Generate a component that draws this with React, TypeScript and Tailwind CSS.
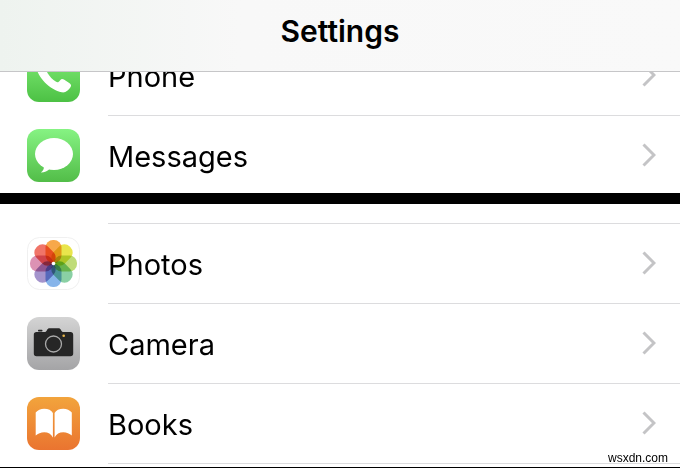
import type { ReactNode } from "react";

const petals = [
  { angle: 0, color: "#f7a84a" },
  { angle: 45, color: "#e9e54c" },
  { angle: 90, color: "#bfdc78" },
  { angle: 135, color: "#8ad0a4" },
  { angle: 180, color: "#86b4ea" },
  { angle: 225, color: "#a494cc" },
  { angle: 270, color: "#dc92b4" },
  { angle: 315, color: "#f07468" },
];

function PhoneIcon() {
  return (
    <svg viewBox="0 0 53 53" className="size-[53px]" aria-hidden="true">
      <defs>
        <linearGradient id="phone-bg" x1="0" y1="0" x2="0" y2="1">
          <stop offset="0" stopColor="#86f07c" />
          <stop offset="1" stopColor="#4cc144" />
        </linearGradient>
      </defs>
      <rect width="53" height="53" rx="12" fill="url(#phone-bg)" />
      <path
        d="M14.500 9.500c1.800-1.400 3.200-1 4.400.8l3.600 5.400c1 1.600.8 2.800-.6 4-1.700 1.400-2.600 2.300-1.400 4.300 2.200 3.700 5 6.500 8.600 8.800 1.700 1 2.500.4 3.900-1.300 1.200-1.600 2.600-1.800 4.300-.7l5.300 3.500c1.700 1.200 1.900 2.500.7 4.300-1.800 2.700-4.600 5.400-8.600 4.700C23.500 41.300 9.500 27.500 9.600 17.500c.1-3.300 2.300-6 4.900-8z"
        fill="#fff"
      />
    </svg>
  );
}

function MessagesIcon() {
  return (
    <svg viewBox="0 0 53 53" className="size-[53px]" aria-hidden="true">
      <defs>
        <linearGradient id="messages-bg" x1="0" y1="0" x2="0" y2="1">
          <stop offset="0" stopColor="#86f383" />
          <stop offset="1" stopColor="#52bd48" />
        </linearGradient>
      </defs>
      <rect width="53" height="53" rx="12" fill="url(#messages-bg)" />
      <ellipse cx="27" cy="25" rx="19" ry="16" fill="#fff" />
      <path d="M17 37c.2 3-1 5-3.200 6.600 3.800 0 6.800-1.200 9.200-4z" fill="#fff" />
    </svg>
  );
}

function PhotosIcon() {
  return (
    <svg viewBox="0 0 53 53" className="size-[53px]" aria-hidden="true">
      <rect x=".5" y=".5" width="52" height="52" rx="12" fill="#fff" stroke="#f0f0f0" />
      <g className="isolate">
        {petals.map((petal) => (
          <rect
            key={petal.angle}
            x="18.500"
            y="3"
            width="16"
            height="23"
            rx="7.500"
            fill={petal.color}
            transform={`rotate(${petal.angle} 26.5 26.5)`}
            className="mix-blend-multiply"
          />
        ))}
      </g>
      <circle cx="26.500" cy="26.500" r="1.800" fill="#fff" />
    </svg>
  );
}

function CameraIcon() {
  return (
    <svg viewBox="0 0 53 53" className="size-[53px]" aria-hidden="true">
      <defs>
        <linearGradient id="camera-bg" x1="0" y1="0" x2="0" y2="1">
          <stop offset="0" stopColor="#d4d4d4" />
          <stop offset="1" stopColor="#a4a4a6" />
        </linearGradient>
      </defs>
      <rect width="53" height="53" rx="12" fill="url(#camera-bg)" />
      <path
        d="M9.500 15h8c1.300 0 1.800-.7 2.400-1.800.7-1.400 1.400-1.900 2.800-1.900h8.600c1.400 0 2.100.5 2.800 1.900.6 1.100 1.100 1.800 2.400 1.800h7c1.700 0 2.700 1 2.700 2.700v18.800c0 1.700-1 2.700-2.700 2.700h-34c-1.700 0-2.700-1-2.700-2.700V17.700c0-1.700 1-2.700 2.700-2.700z"
        fill="#262626"
      />
      <rect x="11" y="12.800" width="4.500" height="1.600" rx=".7" fill="#262626" />
      <circle cx="26.500" cy="27" r="8" fill="none" stroke="#aaa" strokeWidth="1.300" />
      <circle cx="36.700" cy="18.800" r="1.300" fill="#e8b64c" />
    </svg>
  );
}

function BooksIcon() {
  return (
    <svg viewBox="0 0 53 53" className="size-[53px]" aria-hidden="true">
      <defs>
        <linearGradient id="books-bg" x1="0" y1="0" x2="0" y2="1">
          <stop offset="0" stopColor="#f2a43c" />
          <stop offset="1" stopColor="#ea7430" />
        </linearGradient>
      </defs>
      <rect width="53" height="53" rx="12" fill="url(#books-bg)" />
      <path
        d="M8.700 15.500c2-2.500 5-3.800 8.500-3.800 4 0 7.300 1.500 8.700 4.300v24.500c-1.700-3.500-4.700-5.300-8.700-5.300-3.300 0-6.300 1.300-8.500 3.300z"
        fill="#fff"
      />
      <path
        d="M44.800 15.500c-2-2.500-5-3.800-8.500-3.800-4 0-7.300 1.500-8.700 4.300v24.500c1.700-3.500 4.700-5.300 8.700-5.300 3.300 0 6.300 1.300 8.500 3.300z"
        fill="#fff"
      />
    </svg>
  );
}

function Chevron() {
  return (
    <svg viewBox="0 0 14 24" className="h-6 w-[14px] shrink-0" aria-hidden="true">
      <path d="M1.500 1.500 12 12 1.500 22.500" fill="none" stroke="#c4c4c6" strokeWidth="3" />
    </svg>
  );
}

function SettingsRow({ icon, label }: { icon: ReactNode; label: string }) {
  return (
    <li>
      <a href="#" className="flex gap-7 pl-[27px]">
        <span className="shrink-0 pt-[13px]">{icon}</span>
        <span className="flex h-20 flex-1 items-center justify-between border-b border-[#dcdcde] pr-6 pb-0.5">
          <span className="pt-1 text-[29px] leading-9">{label}</span>
          <Chevron />
        </span>
      </a>
    </li>
  );
}

export default function App() {
  return (
    <div className="bg-white font-['Inter','Liberation_Sans',sans-serif] text-black">
      <header className="relative z-10 border-b border-[#c6c6c8] bg-linear-to-r from-[#eef3ef] via-[#f8f8f8] via-35% to-[#f9f9f9] pt-[13px] pb-[22px] text-center">
        <h1 className="text-[30px] leading-9 font-semibold">Settings</h1>
      </header>

      <main>
        {/* the list is scrolled partly under the header */}
        <ul className="-mt-9 -mb-[3px]">
          <SettingsRow icon={<PhoneIcon />} label="Phone" />
          <SettingsRow icon={<MessagesIcon />} label="Messages" />
        </ul>

        <div className="relative h-[11px] bg-black" />

        <div className="ml-[108px] h-5 border-b border-[#dcdcde]" />
        <ul>
          <SettingsRow icon={<PhotosIcon />} label="Photos" />
          <SettingsRow icon={<CameraIcon />} label="Camera" />
          <SettingsRow icon={<BooksIcon />} label="Books" />
        </ul>
      </main>

      <footer className="relative -mt-[14px] border-b border-black pr-3 pb-px text-right font-['Liberation_Sans',sans-serif] text-[12px] leading-4">
        wsxdn.com
      </footer>
    </div>
  );
}
